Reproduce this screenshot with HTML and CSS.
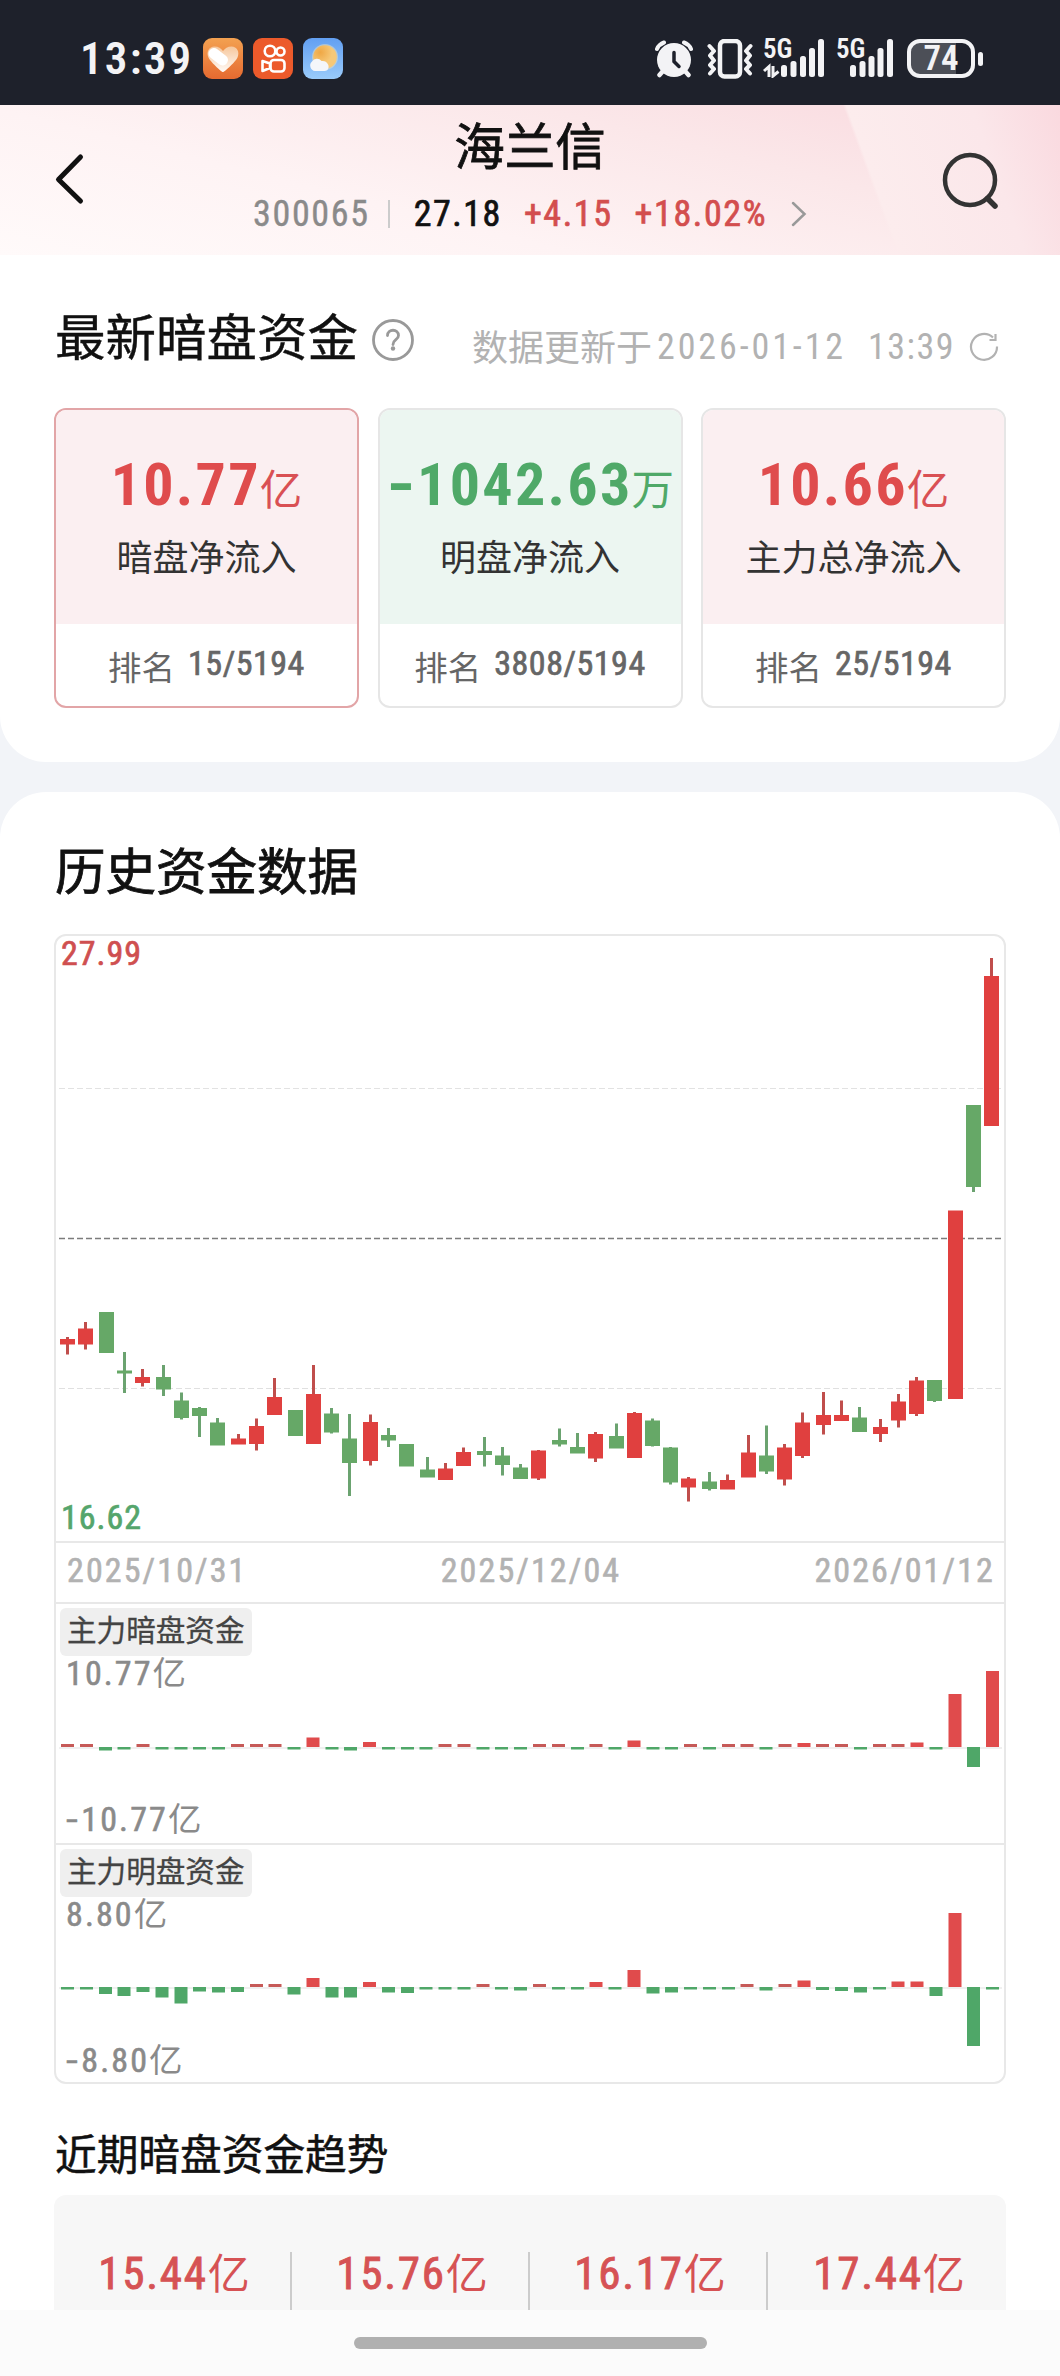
FILE: index.html
```
<!DOCTYPE html>
<html lang="zh-CN">
<head>
<meta charset="utf-8">
<title>海兰信 300065</title>
<link rel="stylesheet" href="styles.css">
</head>
<body>
<header class="status">
  <span class="clock num">13:39</span>
  <div class="apps">
    <svg width="40" height="41" viewBox="0 0 40 41">
      <defs><linearGradient id="og" x1="0" y1="0" x2="0" y2="1"><stop offset="0" stop-color="#f3a151"/><stop offset="1" stop-color="#e56a30"/></linearGradient>
      <linearGradient id="ht" x1="0" y1="0" x2="0" y2="1"><stop offset="0" stop-color="#f6c79c"/><stop offset="1" stop-color="#fffaf6"/></linearGradient></defs>
      <rect width="40" height="41" rx="9" fill="url(#og)"/>
      <path d="M20 34c-2 0-13-11-14.500-14.500C3 14 6 8.500 11.500 8.500c4 0 6.500 2 8.500 4.500 2-2.500 4.500-4.500 8.500-4.500 5.500 0 8.500 5.500 6 11C33 23 22 34 20 34z" fill="url(#ht)"/>
      <path d="M11 15.500l8.500 6.500" stroke="#fff" stroke-width="11" stroke-linecap="round"/>
    </svg>
    <svg width="40" height="41" viewBox="0 0 40 41">
      <rect width="40" height="41" rx="9" fill="#ec5a2b"/>
      <g fill="none" stroke="#fff" stroke-width="2.600"><circle cx="17" cy="13" r="5.300"/><circle cx="27.500" cy="13.500" r="4"/><rect x="17.500" y="22" width="14" height="11.500" rx="3.500"/><path d="M17 25.500l-7.500-2.500v10l7.500-3z" stroke-linejoin="round"/></g>
    </svg>
    <svg width="40" height="41" viewBox="0 0 40 41">
      <defs><linearGradient id="sky" x1="0" y1="0" x2="0" y2="1"><stop offset="0" stop-color="#629ff2"/><stop offset="1" stop-color="#9acbfa"/></linearGradient>
      <radialGradient id="sun" cx=".3" cy=".3"><stop offset="0" stop-color="#efa744"/><stop offset="1" stop-color="#f6c878"/></radialGradient></defs>
      <rect width="40" height="41" rx="9" fill="url(#sky)"/>
      <circle cx="22" cy="19" r="13" fill="#d7d9c8" opacity=".6"/><circle cx="22" cy="19" r="11.800" fill="url(#sun)"/>
      <path d="M12 33a5.500 5.500 0 0 1-3-9.500 5.800 5.800 0 0 1 9.500-.5 6 6 0 0 1 7 7c-.5 2-2 3-4 3z" fill="#f4f6fa"/>
    </svg>
  </div>
  <div class="signals">
    <svg width="38" height="38" viewBox="0 0 38 38">
      <g fill="none" stroke="#f3f3f5" stroke-linecap="round"><path d="M2 9a12 12 0 0 1 7-6.500M36 9a12 12 0 0 0-7-6.500" stroke-width="4"/><path d="M8 31l-3.500 4M30 31l3.500 4" stroke-width="4.500"/></g>
      <circle cx="19" cy="20" r="17" fill="#f3f3f5"/><path d="M19 12.500v9l5 5" fill="none" stroke="#1e212b" stroke-width="3.500" stroke-linecap="round"/>
    </svg>
    <svg width="46" height="40" viewBox="0 0 46 40">
      <rect x="13" y="2" width="20" height="35.500" rx="4.500" fill="none" stroke="#f3f3f5" stroke-width="4.500"/>
      <path d="M2.500 7l4.500 5-4 4.500 4 5-4 4.500 4 4-4 4.500M43.500 7l-4.500 5 4 4.500-4 5 4 4.500-4 4 4 4.500" fill="none" stroke="#f3f3f5" stroke-width="4" stroke-linejoin="round" stroke-linecap="round"/>
    </svg>
    <div class="cell">
      <span class="gen num">5G</span>
      <svg width="62" height="39" viewBox="0 0 62 39"><g fill="#f3f3f5"><rect x="18" y="26" width="6" height="12" rx="2.500"/><rect x="27.500" y="22" width="6" height="16" rx="2.500"/><rect x="37" y="17" width="6" height="21" rx="2.500"/><rect x="46" y="9" width="6" height="29" rx="2.500"/><rect x="55" y="0" width="6" height="38" rx="2.500"/></g><path d="M1 32l5-4.500V38M10 27v10l5.500-4.500" fill="none" stroke="#f3f3f5" stroke-width="3"/></svg>
    </div>
    <div class="cell cell-b">
      <span class="gen num">5G</span>
      <svg width="58" height="39" viewBox="0 0 58 39"><g fill="#f3f3f5"><rect x="14" y="26" width="6" height="12" rx="2.500"/><rect x="23.500" y="22" width="6" height="16" rx="2.500"/><rect x="32.500" y="17" width="6" height="21" rx="2.500"/><rect x="41.500" y="9" width="6" height="29" rx="2.500"/><rect x="51" y="0" width="6" height="38" rx="2.500"/></g></svg>
    </div>
    <div class="battery"><span class="level num">74</span></div><i class="cap"></i>
  </div>
</header>

<nav class="head">
  <svg class="back" width="32" height="52" viewBox="0 0 32 52"><path d="M26.500 4L4.500 26.500l22 21.500" fill="none" stroke="#111" stroke-width="5" stroke-linecap="round" stroke-linejoin="round"/></svg>
  <div class="stock">
    <h1 class="name">海兰信</h1>
    <div class="quote num">
      <span class="code">300065</span><i class="bar"></i><span class="price">27.18</span><span class="chg">+4.15</span><span class="pct">+18.02%</span>
      <svg width="16" height="26" viewBox="0 0 16 26"><path d="M2 2l11.500 11L2 24" fill="none" stroke="#999" stroke-width="2.500" stroke-linecap="round"/></svg>
    </div>
  </div>
  <svg class="search" width="58" height="60" viewBox="0 0 58 60"><circle cx="29" cy="28" r="25" fill="none" stroke="#333" stroke-width="4.500"/><path d="M46.500 46.500l7.500 7.500" stroke="#333" stroke-width="5.500" stroke-linecap="round"/></svg>
</nav>

<section class="panel latest">
  <div class="latest-head">
    <h2 class="title">最新暗盘资金</h2>
    <svg class="help" width="42" height="42" viewBox="0 0 42 42"><circle cx="21" cy="21" r="19.500" fill="none" stroke="#999" stroke-width="2.800"/><path d="M15.500 16.500c0-7 11-7 11 0 0 4.500-5.500 4-5.500 9" fill="none" stroke="#999" stroke-width="2.800" stroke-linecap="round"/><circle cx="21" cy="29.500" r="2.200" fill="#999"/></svg>
    <p class="updated"><span class="u-label">数据更新于</span><span class="num u-date">2026-01-12</span><span class="num u-time">13:39</span>
    <svg width="30" height="30" viewBox="0 0 30 30"><path d="M24 5.500A13 13 0 1 0 28 14.500M20.500 8h6V2" fill="none" stroke="#b2b2b2" stroke-width="2.200"/></svg></p>
  </div>
  <div class="cards">
    <article class="card card-on">
      <div class="card-top"><p class="amount"><b class="num">10.77</b>亿</p><p class="label">暗盘净流入</p></div>
      <p class="rank">排名<span class="num">15/5194</span></p>
    </article>
    <article class="card down">
      <div class="card-top"><p class="amount"><b class="num"><span class="minus">-</span>1042.63</b>万</p><p class="label">明盘净流入</p></div>
      <p class="rank">排名<span class="num">3808/5194</span></p>
    </article>
    <article class="card">
      <div class="card-top"><p class="amount"><b class="num">10.66</b>亿</p><p class="label">主力总净流入</p></div>
      <p class="rank">排名<span class="num">25/5194</span></p>
    </article>
  </div>
</section>

<section class="panel history">
  <h2 class="title">历史资金数据</h2>
  <div class="chart">
    <div class="pane candles">
      <svg id="candles" width="948" height="606" viewBox="56 936 948 606"></svg>
      <span class="num hi">27.99</span><span class="num lo">16.62</span>
    </div>
    <div class="dates num"><span>2025/10/31</span><span>2025/12/04</span><span>2026/01/12</span></div>
    <div class="pane flow">
      <svg id="dark" width="948" height="239" viewBox="56 1604 948 239"></svg>
      <div class="scale"><span class="tag">主力暗盘资金</span><span class="top"><span class="num">10.77</span>亿</span><span class="bottom"><span class="num"><span class="minus">-</span>10.77</span>亿</span></div>
    </div>
    <div class="pane flow">
      <svg id="open" width="948" height="239" viewBox="56 1845 948 239"></svg>
      <div class="scale"><span class="tag">主力明盘资金</span><span class="top"><span class="num">8.80</span>亿</span><span class="bottom"><span class="num"><span class="minus">-</span>8.80</span>亿</span></div>
    </div>
  </div>
  <h3 class="subtitle">近期暗盘资金趋势</h3>
  <div class="trend">
    <p><span class="num">15.44</span>亿</p><p><span class="num">15.76</span>亿</p><p><span class="num">16.17</span>亿</p><p><span class="num">17.44</span>亿</p>
  </div>
</section>
<footer class="gesture"><i></i></footer>
<script src="chart.js"></script>
</body>
</html>
```
FILE: styles.css
```
* { box-sizing: border-box; margin: 0; padding: 0; }
body { width: 1060px; height: 2376px; overflow: hidden; display: flex; flex-direction: column; background: #f2f4f8; font-family: "Noto Sans CJK SC", sans-serif; font-weight: 400; color: #111; }
svg { display: block; flex: none; }
span, p, h1, h2, h3 { white-space: nowrap; }
.num { font-family: "Roboto Condensed", Roboto, "Noto Sans CJK SC", sans-serif; font-stretch: 75%; font-weight: 400; }

.status { height: 105px; flex: none; background: #1e212b; color: #f3f3f5; display: flex; align-items: center; padding: 12px 77px 0 80px; }
.clock { font-size: 45px; font-weight: 600; width: 123px; letter-spacing: 2.2px; line-height: 50px; }
.apps { display: flex; gap: 10px; }
.signals { display: flex; align-items: center; margin-left: auto; }
.signals > svg + svg { margin-left: 14px; }
.cell { position: relative; margin-left: 10px; width: 63px; }
.cell-b { margin-left: 10px; width: 58px; }
.gen { position: absolute; left: 0; top: -3px; font-size: 27px; line-height: 27px; font-weight: 600; }
.battery { width: 68px; height: 39px; border: 4px solid #f3f3f5; border-radius: 13px; margin-left: 13px; background: linear-gradient(90deg, #4c4f57 75%, #1e212b 75%); display: flex; align-items: center; justify-content: center; }
.level { font-size: 35px; font-weight: 600; line-height: 35px; }
.cap { width: 5px; height: 14px; border-radius: 3px; background: #f3f3f5; margin-left: 3px; }

.head { height: 150px; flex: none; display: grid; grid-template-columns: 1fr auto 1fr; padding: 0 61px 0 54px; background: linear-gradient(70deg, transparent 80.500%, #fceced 80.800%, #fbe7ea 92%, #fad9df 100%), linear-gradient(14deg, #fffafa 0%, #fef3f4 35%, #fbe7e9 68%, #fadfe3 85%); }
.back { margin-top: 48px; }
.search { margin-top: 47px; justify-self: end; }
.stock { display: flex; flex-direction: column; align-items: center; padding-left: 7px; }
.name { font-size: 50.500px; font-weight: 400; -webkit-text-stroke: .8px #111; line-height: 60px; margin-top: 8px; }
.quote { display: flex; align-items: center; font-size: 36px; line-height: 42px; height: 42px; margin: 20px 0 0 0; }
.code { color: #8a8a8a; letter-spacing: 1.700px; -webkit-text-stroke: .4px #8a8a8a; }
.bar { width: 2px; height: 28px; background: #ccc; margin: 0 24px 0 18px; }
.price { letter-spacing: 1.500px; -webkit-text-stroke: .7px #111; }
.chg { margin-left: 22px; }
.pct { margin: 0 24px 0 22px; }
.chg, .pct { color: #d34e4e; letter-spacing: 1.600px; -webkit-text-stroke: .7px #d34e4e; }

.panel { background: #fff; flex: none; padding: 0 54px; }
.latest { height: 507px; border-radius: 0 0 46px 46px; }
.title { font-size: 50.500px; line-height: 64px; font-weight: 400; -webkit-text-stroke: .4px #111; padding-left: 1px; }
.latest-head { display: flex; height: 153px; padding-top: 47px; align-items: flex-start; }
.help { margin: 17px 0 0 14px; }
.updated { display: flex; align-items: center; margin-left: auto; padding-right: 7px; color: #b2b2b2; font-size: 36px; line-height: 40px; margin-top: 25px; }
.u-label { margin-top: -5px; }
.u-date { margin-left: 5px; letter-spacing: 2.900px; }
.u-time { margin-left: 22px; letter-spacing: 1.500px; }
.updated svg { margin-left: 14px; }
.cards { display: grid; grid-template-columns: repeat(3, 305px); justify-content: space-between; height: 300px; }
.card { border: 2px solid #e6e6e6; border-radius: 12px; overflow: hidden; }
.card-on { border-color: #e2a5a7; }
.card-top { height: 214px; background: #fbeff1; display: flex; flex-direction: column; align-items: center; }
.down .card-top { background: #ecf6f1; }
.amount { font-size: 42.500px; line-height: 64px; margin-top: 43px; color: #d95054; display: flex; align-items: baseline; }
.amount b { font-size: 60px; font-weight: 700; letter-spacing: 2.300px; margin-right: -1px; color: #df4c4d; }
.down .amount, .down .amount b { color: #4fa968; }
.label { color: #333; font-size: 36px; line-height: 44px; margin-top: 14px; }
.rank { height: 82px; display: flex; justify-content: center; font-size: 33.500px; line-height: 84px; color: #666; }
.rank .num { margin-left: 13px; font-size: 34px; letter-spacing: .5px; line-height: 79px; -webkit-text-stroke: .7px #666; }

.history { margin-top: 30px; height: 1518px; border-radius: 46px 46px 0 0; padding-top: 44px; }
.history .title { -webkit-text-stroke-width: .8px; }
.chart { margin-top: 34px; height: 1150px; border: 2px solid #e8e8e8; border-radius: 12px; }
.pane { position: relative; border-bottom: 2px solid #e8e8e8; }
.pane:last-child { border: 0; }
.candles { height: 607px; }
.hi, .lo { position: absolute; left: 5px; font-size: 34px; line-height: 34px; letter-spacing: 1px; }
.hi { top: 0; color: #cf4f50; -webkit-text-stroke: .7px #cf4f50; }
.lo { bottom: 7px; color: #55a56c; -webkit-text-stroke: .7px #55a56c; }
.dates { height: 61px; border-bottom: 2px solid #e8e8e8; padding: 0 9px 0 11px; display: flex; justify-content: space-between; font-size: 34px; line-height: 54px; color: #b2b2b2; letter-spacing: 2.100px; -webkit-text-stroke: .6px #b2b2b2; }
.flow { height: 241px; }
.scale { position: absolute; inset: 4px auto auto 4px; height: 228px; display: flex; flex-direction: column; align-items: flex-start; color: #8a8a8a; font-size: 33.500px; line-height: 34px; }
.scale .num { font-size: 34px; letter-spacing: 2.100px; -webkit-text-stroke: .6px #8a8a8a; }
.tag { background: #efefef; border-radius: 6px; height: 48px; padding: 0 7.500px 0 7px; font-size: 29.600px; line-height: 42px; color: #444; -webkit-text-stroke: .3px #444; }
.top, .bottom { padding-left: 6px; display: flex; align-items: baseline; }
.top { margin-top: -2px; }
.bottom { margin-top: auto; }
.minus { display: inline-block; transform: scaleX(1.400); transform-origin: left; margin-right: .14em; }
.amount .minus { margin-right: .12em; }
.subtitle { font-size: 41.700px; font-weight: 400; -webkit-text-stroke: .5px #111; line-height: 60px; margin-top: 38px; padding-left: 1px; }
.trend { margin-top: 13px; height: 130px; background: #f7f7f7; border-radius: 12px 12px 0 0; display: grid; grid-template-columns: repeat(4, 1fr); padding-top: 57px; color: #d65254; font-size: 42px; line-height: 38px; }
.trend p { display: flex; align-items: baseline; justify-content: center; height: 73px; padding-left: 4px; }
.trend p:not(:last-child) { border-right: 2px solid #ccc; }
.trend .num { font-size: 45px; letter-spacing: 1.800px; -webkit-text-stroke: .9px #d65254; }
.gesture { flex: none; height: 66px; background: #fbfbfb; display: flex; justify-content: center; padding-top: 27px; }
.gesture i { width: 353px; height: 12px; border-radius: 6px; background: #b0b0b0; }
```
FILE: chart.js
```
const NS = 'http://www.w3.org/2000/svg';
function add(svg, name, attrs) {
  const el = document.createElementNS(NS, name);
  for (const k in attrs) el.setAttribute(k, attrs[k]);
  svg.appendChild(el);
}
const rect = (svg, x, y, w, h, fill) => add(svg, 'rect', { x, y, width: w, height: h, fill });

// x, direction, body top, body bottom, wick top, wick bottom
const days = [
  [60,'r',1339,1344.5,1337,1354.5],[78,'r',1328.5,1344.5,1322,1349.5],[99,'g',1312,1353],[117,'g',1370.5,1373.5,1352,1393],
  [135,'r',1377,1383,1369,1386.5],[156,'g',1377,1389.5,1365,1396],[174,'g',1400.5,1418,1392.5,1419.5],[192,'g',1408,1416,1407,1437],
  [210,'g',1422.5,1445.5,1418,1445],[231,'r',1438.5,1444.5,1434,1444],[249,'r',1426,1444,1418.5,1450.5],[267,'r',1397,1415,1378,1415],
  [288,'g',1410,1436],[306,'r',1394,1444,1365,1444],[324,'g',1413.5,1432.5,1408,1433.5],[342,'g',1438.5,1463,1414,1496],
  [363,'r',1422,1461,1414.5,1465.5],[381,'g',1435,1440.5,1428,1447],[399,'g',1444,1466.5],[420,'g',1469.5,1477.5,1457,1477],
  [438,'r',1468.5,1480,1463,1480],[456,'r',1452,1466,1447.5,1466],[477,'g',1451,1455,1437,1466.5],[495,'g',1455.5,1465,1447,1475.5],
  [513,'g',1467.5,1479,1464,1479],[531,'r',1450.5,1478.5,1450,1480],[552,'g',1440,1444.5,1428.5,1446.5],[570,'g',1447,1453.5,1433,1453],
  [588,'r',1434,1458.5,1432,1462],[609,'g',1436,1448.5,1423.5,1448],[627,'r',1413,1458,1412,1458],[645,'g',1420.5,1446,1418.5,1446.5],
  [663,'g',1447.5,1482.5,1447,1484.5],[681,'r',1478.5,1487.5,1477,1501.5],[702,'g',1481.5,1489,1472,1490.5],[720,'r',1480,1489.5,1474.5,1489],
  [741,'r',1452.5,1477.5,1435,1477],[759,'g',1455.5,1471.5,1425.5,1474],[777,'r',1447.5,1479.5,1444,1485.5],[795,'r',1422.5,1456,1412.5,1458],
  [816,'r',1415,1425,1392,1434.5],[834,'r',1415,1421,1400.5,1421],[852,'g',1417.5,1432,1407,1432],[873,'r',1427,1434,1419,1442],
  [891,'r',1401.5,1420.5,1394,1427.5],[909,'r',1380.5,1414,1377,1416],[927,'g',1380,1401,1380,1402],[948,'r',1210.5,1399],
  [966,'g',1105,1187,1105,1192],[984,'r',976,1126,958,1126]
];
const main = document.getElementById('candles');
[[1088.5, '#e2e2e2', 1.2], [1238.5, '#7c7c7c', 1.5], [1388.5, '#e0e0e0', 1.2]].forEach(([y, stroke, w]) =>
  add(main, 'path', { d: `M59 ${y}H1001`, stroke, 'stroke-width': w, 'stroke-dasharray': '6 3' }));
days.forEach(([x, dir, top, bottom, high, low]) => {
  if (high) rect(main, x + 6, high, 3, low - high, dir === 'r' ? '#c04e4c' : '#6ba370');
  rect(main, x, top, 15, bottom - top, dir === 'r' ? '#e0403f' : '#66a867');
});

// net flow per day as drawn height, positive above the zero line
function flow(id, zero, values) {
  const svg = document.getElementById(id);
  rect(svg, 59, zero + .5, 943, 1, '#e2e2e2');
  values.forEach((v, i) => {
    const small = Math.abs(v) < 4;
    rect(svg, Math.round((61 + 18.88 * i) * 2) / 2, v > 0 ? zero - v : zero, 13, Math.abs(v),
      v > 0 ? (small ? '#c65a58' : '#e04b4c') : '#4fa768');
  });
}
flow('dark', 1747, [3,3,-3.5,-2.5,3,-2.5,-2.5,-2.5,-2.5,3,3,3,-2.5,9.5,-2.5,-3.5,5,-2.5,-2.5,-2.5,3,3,-2.5,-2.5,-2.5,
  3,3,-2.5,3,-2.5,6.5,-2.5,-2.5,3,-2.5,3,3,-2.5,3,4,3,3,-2.5,3,3,4.5,-2.5,53,-20,76]);
flow('open', 1987, [-2.5,-2.5,-7,-9,-5,-10.5,-16.5,-4.5,-5.5,-5,3,3,-7.5,9,-10.5,-10.5,5,-5.5,-6,-2.5,-2.5,-2.5,3,-2.5,-3.5,
  3,-2.5,-2.5,5,-2.5,17,-6.5,-5.5,-2.5,-2.5,-2.5,3,-3.5,3,6.5,-3,-4,-5.5,-2.5,5.5,5.5,-9,74,-59,-2.5]);
```
